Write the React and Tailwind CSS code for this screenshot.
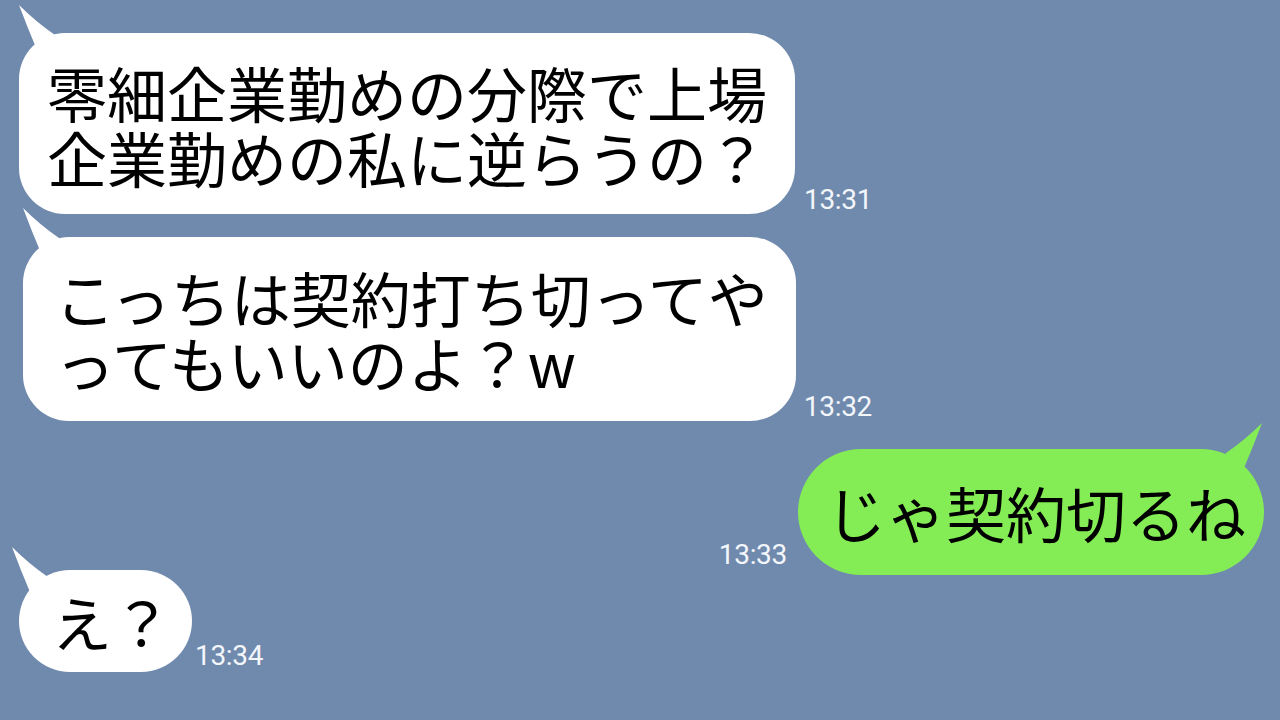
import React from "react";

// Chat screenshot: LINE-style bubbles on a blue-gray background
const JP = { fontFamily: '"Noto Sans CJK JP", "Noto Sans", sans-serif' };

function Tail({ className, color }) {
  // tip sits at (0,0); the base runs into the bubble's rounded corner
  return (
    <svg
      width="50"
      height="70"
      viewBox="0 0 50 70"
      className={`absolute pointer-events-none ${className}`}
    >
      <path d="M0 0 Q9 24 18 45 L40 63 L36 30 Q17 17 0 0 Z" fill={color} />
    </svg>
  );
}

function Time({ children, className = "" }) {
  return (
    <span
      className={`text-[28px] leading-none tracking-[-0.3px] text-[#f3f6fa] whitespace-nowrap ${className}`}
      style={{ fontFamily: 'Roboto, "Liberation Sans", sans-serif' }}
    >
      {children}
    </span>
  );
}

export default function App() {
  return (
    <div
      className="w-[1280px] h-[720px] overflow-hidden bg-[#708aae] flex flex-col pt-[33px]"
      style={JP}
    >
      {/* message 1 */}
      <div className="flex items-end pl-[19px]">
        <div className="relative bg-white rounded-[46px] pl-[28px] pr-[28px] pt-[26px] pb-[25px] text-[60px] leading-[65px] text-black whitespace-nowrap">
          <Tail className="left-0 top-[-28px]" color="#ffffff" />
          <span className="relative">
            零細企業勤めの分際で上場
            <br />
            企業勤めの私に逆らうの？
          </span>
        </div>
        <Time className="ml-[9px]">13:31</Time>
      </div>

      {/* message 2 */}
      <div className="flex items-end pl-[23px] mt-[23px]">
        <div className="relative bg-white rounded-[46px] pl-[32px] pr-[28px] pt-[27px] pb-[27px] text-[60px] leading-[65px] text-black whitespace-nowrap">
          <Tail className="left-0 top-[-29px]" color="#ffffff" />
          <span className="relative">
            こっちは契約打ち切ってや
            <br />
            ってもいいのよ？w
          </span>
        </div>
        <Time className="ml-[8px]">13:32</Time>
      </div>

      {/* my reply */}
      <div className="flex items-end justify-end pr-[16px] mt-[28px]">
        <Time className="mr-[11px] mb-[6px]">13:33</Time>
        <div className="relative bg-[#84ec54] rounded-full pl-[28px] pr-[18px] pt-[30px] pb-[31px] text-[60px] leading-[65px] text-black whitespace-nowrap">
          <Tail className="right-[2px] top-[-26px] -scale-x-100" color="#84ec54" />
          <span className="relative">じゃ契約切るね</span>
        </div>
      </div>

      {/* message 4 */}
      <div className="flex items-end pl-[19px] mt-[-5px]">
        <div className="relative bg-white rounded-full pl-[33px] pr-[20px] pt-[18px] pb-[19px] text-[60px] leading-[65px] text-black whitespace-nowrap">
          <Tail className="left-[-7px] top-[-23px]" color="#ffffff" />
          <span className="relative">え？</span>
        </div>
        <Time className="ml-[3px] mb-[2px]">13:34</Time>
      </div>
    </div>
  );
}
